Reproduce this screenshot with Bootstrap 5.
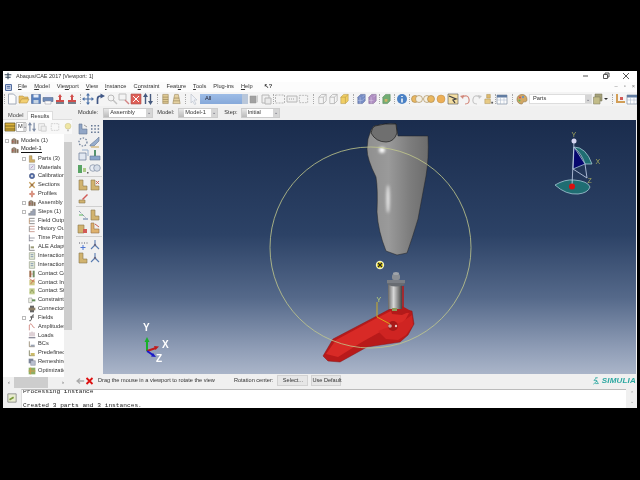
<!DOCTYPE html>
<html lang="en">
<head>
  <meta charset="UTF-8">
  <title>Abaqus/CAE 2017 [Viewport: 1]</title>
  <link href="https://cdn.jsdelivr.net/npm/bootstrap@5.3.2/dist/css/bootstrap.min.css" rel="stylesheet">
  <style>
    html, body { height: 100%; }
    body { background: #000; font-family: "Liberation Sans", Arial, sans-serif; font-size: 5.7px; line-height: 1; color: #333; overflow: hidden; }
    svg { display: block; }

    .cae-window { width: 634px; height: 337px; margin: 71px 0 0 3px; background: #f0f0f0; filter: blur(.4px); overflow: hidden; }
    .title-row { height: 11px; background: #fff; padding-left: 1px; font-size: 5.5px; }
    .title-row .win-btns { gap: 12px; padding-right: 7px; margin-left: auto; }
    .menu-row { height: 11px; background: #fcfcfc; padding-left: 2px; gap: 7px; }
    .menu-row u { text-underline-offset: 1px; }
    .menu-logo { margin-right: -1px; }
    .mdi-btns { margin-left: auto; gap: 6px; padding-right: 2px; color: #777; }
    .tool-row { height: 14px; background: #f4f4f4; }
    .tool-row .slot svg, .toolbox .slot svg { opacity: .78; }
    .slot { width: 12px; height: 12px; flex: none; }
    .slot-tight { width: 11px; }
    .slot-tree { width: 10px; height: 10px; opacity: .55; }
    .slot-gap { margin-left: 3px; }
    .vsep { flex: none; display: flex; justify-content: center; }
    .vsep::after { content: ""; width: 1px; height: 10px; border-left: 1px dotted #aaa; }
    .all-combo { width: 48px; height: 10px; background: linear-gradient(#9dbce6, #86a9da); padding-left: 5px; display: flex; align-items: center; flex: none; color: #223; }
    .all-combo span { margin-left: auto; width: 6px; height: 100%; background: #b9c7da; }
    .parts-combo { width: 63px; height: 10px; margin-left: 1px; background: #fff; border: 1px solid #ddd; padding-left: 3px; display: flex; align-items: center; flex: none; }
    .drop { margin-left: auto; width: 6px; height: 100%; background: #d6d6d6; color: #556; font-size: 5px; display: flex; align-items: center; justify-content: center; }
    .caret-tiny { width: 0; height: 0; border-left: 2px solid transparent; border-right: 2px solid transparent; border-top: 2px solid #333; flex: none; margin-right: 3px; }

    .left-col { width: 69px; flex: none; }
    .tab-row { height: 14px; padding: 5px 0 0 2px; border-bottom: 1px solid #ddd; }
    .tab-row .nav-link { padding: 0 3px; height: 9px; line-height: 9px; font-size: 5.7px; color: #444; border-radius: 0; margin: 0; border: 0; }
    .tab-row .nav-link.active { background: #fff; border: 1px solid #ddd; border-bottom: 0; line-height: 8px; color: #333; }
    .tree-tools { height: 14px; background: #f8f8f8; padding-left: 1px; }
    .tree-combo { width: 10px; height: 10px; border: 1px solid #bbb; background: #fff; display: flex; align-items: center; margin-right: 1px; flex: none; padding-left: 1px; }
    .tree-combo .drop { width: 4px; }
    .tree-wrap { height: 254px; background: #fff; position: relative; }
    .tree-list { width: 61px; height: 243px; overflow: hidden; padding-top: 2.5px; }
    .tree-row { height: 8.85px; display: flex; align-items: center; white-space: nowrap; position: relative; }
    .tree-row svg { width: 8px; height: 8px; flex: none; margin-right: 2px; opacity: .85; }
    .tree-box { width: 4px; height: 4px; border: 1px solid #bbb; flex: none; margin-right: 2px; }
    .lvl0 { padding-left: 2px; }
    .lvl1 { padding-left: 8px; }
    .lvl2 { padding-left: 25px; }
    .lvl2b { padding-left: 19px; }
    .model-name { border-bottom: 1px solid #111; color: #222; padding-bottom: .5px; }
    .v-bar { width: 8px; height: 243px; background: #f0f0f0; flex: none; }
    .v-thumb { height: 188px; margin-top: 8px; background: #cdcdcd; }
    .h-bar { height: 11px; background: #f0f0f0; padding: 0 8px 0 5px; color: #555; }
    .h-thumb { width: 34px; height: 11px; background: #cdcdcd; margin: 0 auto 0 4px; }

    .ctx-row { height: 14px; background: #f0f0f0; padding-left: 6px; }
    .ctx-combo { height: 10px; background: #fff; border: 1px solid #ccc; display: flex; align-items: center; flex: none; }
    .ctx-combo i { width: 5px; height: 100%; background: linear-gradient(#e8e8e8, #bbb); margin-right: 1px; flex: none; }
    .w-mod { width: 50px; margin: 0 4px 0 5px; }
    .w-model { width: 40px; margin: 0 6px 0 4px; }
    .w-step { width: 39px; margin-left: 3px; }
    .toolbox { width: 31px; flex: none; background: #f0f0f0; padding: 3px 0 0 5px; }
    .tb-grid { display: grid; grid-template-columns: 12px 12px; row-gap: 1px; }
    .tb-line { width: 26px; height: 1px; background: #cfcfcf; margin: 2px 0 2px -1px; }
    .viewport { width: 533px; height: 254px; flex: none; }

    .prompt-row { height: 14px; background: #f0f0f0; padding-left: 3px; font-size: 5.6px; }
    .prompt-row .btn { font-size: 5.6px; line-height: 1; height: 11px; padding: 0; border-radius: 0; background: #e6e6e6; border: 1px solid #d2d2d2; color: #333; white-space: nowrap; }
    .rot-label { margin-left: 19px; }
    .btn-select { width: 31px; margin-left: 4px; }
    .btn-default { width: 30px; margin-left: 3px; }
    .simulia { margin-left: auto; color: #2aa7a0; font-weight: bold; font-style: italic; font-size: 8px; letter-spacing: .2px; gap: 2px; white-space: nowrap; overflow: hidden; width: 44px; flex: none; }
    .msg-row { height: 19px; margin-top: 1px; background: #f0f0f0; }
    .msg-icon { width: 18px; flex: none; display: flex; align-items: center; justify-content: center; }
    .msg-box { flex: 1; background: #fff; border-top: 1px solid #bbb; border-left: 1px solid #ddd; font-family: "Liberation Mono", "Courier New", monospace; font-size: 6.2px; overflow: hidden; color: #222; position: relative; }
    .msg-box p { margin: 0; height: 9px; line-height: 9px; padding-left: 1px; white-space: pre; }
    .msg-first { margin-top: -3px !important; }
    .msg-last { margin-top: 5px !important; }
    .msg-bar { width: 11px; flex: none; background: #f0f0f0; color: #999; font-size: 5px; text-align: center; line-height: 8px; }
  </style>
</head>
<body>
  <div class="cae-window d-flex flex-column">
    <!-- Title bar -->
    <div class="title-row d-flex align-items-center">
      <svg class="me-1" width="8" height="8" viewBox="0 0 12 12"><path d="M6 1v10M1 4h10M2 8h8" stroke="#345" stroke-width="1.6"/></svg>
      <span>Abaqus/CAE 2017 [Viewport: 1]</span>
      <div class="win-btns d-flex align-items-center">
        <svg width="8" height="8" viewBox="0 0 8 8"><path d="M1 4h5" stroke="#555"/></svg>
        <svg width="8" height="8" viewBox="0 0 8 8"><path d="M1.5 2.5h4v4h-4zM3 2.5V1h4v4H5.500" fill="none" stroke="#555"/></svg>
        <svg width="8" height="8" viewBox="0 0 8 8"><path d="M1 1l6 6M7 1L1 7" stroke="#555"/></svg>
      </div>
    </div>

    <!-- Menu bar -->
    <div class="menu-row d-flex align-items-center">
      <svg class="menu-logo" width="7" height="7" viewBox="0 0 12 12"><path d="M1 1h10v10H1z" fill="#dfe6f2" stroke="#2b4c8c" stroke-width="1.500"/><path d="M3 4h6M3 7h6" stroke="#2b4c8c" stroke-width="1.500"/></svg>
      <span><u>F</u>ile</span>
      <span><u>M</u>odel</span>
      <span>Vie<u>w</u>port</span>
      <span><u>V</u>iew</span>
      <span><u>I</u>nstance</span>
      <span>C<u>o</u>nstraint</span>
      <span>Feat<u>u</u>re</span>
      <span><u>T</u>ools</span>
      <span>Plug-ins</span>
      <span><u>H</u>elp</span>
      <span class="ms-1 fw-bold">↖?</span>
      <div class="mdi-btns d-flex"><span>–</span><span>▫</span><span>×</span></div>
    </div>

    <!-- Main toolbar, filled in by the script below -->
    <div id="mainTools" class="tool-row d-flex align-items-center"></div>

    <div class="d-flex flex-grow-1">
      <!-- Model tree -->
      <div class="left-col d-flex flex-column">
        <div class="tab-row">
          <ul class="nav">
            <li class="nav-item"><a class="nav-link" href="#">Model</a></li>
            <li class="nav-item"><a class="nav-link active" href="#">Results</a></li>
          </ul>
        </div>
        <div id="treeTools" class="tree-tools d-flex align-items-center"></div>
        <div class="tree-wrap">
          <div class="d-flex">
            <div id="tree" class="tree-list"></div>
            <div class="v-bar"><div class="v-thumb"></div></div>
          </div>
          <div class="h-bar d-flex align-items-center"><span>‹</span><div class="h-thumb"></div><span>›</span></div>
        </div>
      </div>

      <div class="d-flex flex-column">
        <!-- Module / Model / Step -->
        <div class="ctx-row d-flex align-items-center">
          <span>Module:</span>
          <div class="ctx-combo w-mod"><i></i>Assembly<div class="drop">⌄</div></div>
          <span>Model:</span>
          <div class="ctx-combo w-model"><i></i>Model-1<div class="drop">⌄</div></div>
          <span>Step:</span>
          <div class="ctx-combo w-step"><i></i>Initial<div class="drop">⌄</div></div>
        </div>

        <div class="d-flex">
          <div id="toolbox" class="toolbox"></div>

          <!-- Viewport, coordinates are the screenshot's own -->
          <svg class="viewport" viewBox="103 121 533 254">
            <defs>
              <linearGradient id="bg" x1="0" y1="0" x2="0" y2="1">
                <stop offset="0" stop-color="#1a2c4d"/>
                <stop offset=".45" stop-color="#2c4266"/>
                <stop offset=".7" stop-color="#55698a"/>
                <stop offset=".9" stop-color="#8f9db6"/>
                <stop offset="1" stop-color="#aab5c9"/>
              </linearGradient>
              <linearGradient id="socket" x1="0" y1="0" x2="1" y2="0">
                <stop offset="0" stop-color="#8f8f8f"/>
                <stop offset=".35" stop-color="#9a9a9a"/>
                <stop offset=".7" stop-color="#7d7d7d"/>
                <stop offset="1" stop-color="#6c6c6c"/>
              </linearGradient>
              <linearGradient id="pin" x1="0" y1="0" x2="1" y2="0">
                <stop offset="0" stop-color="#666"/>
                <stop offset=".4" stop-color="#d8d8d8"/>
                <stop offset=".65" stop-color="#999"/>
                <stop offset="1" stop-color="#444"/>
              </linearGradient>
              <filter id="soft" x="-200%" y="-200%" width="500%" height="500%"><feGaussianBlur stdDeviation="1.600"/></filter>
            </defs>
            <rect x="103" y="121" width="533" height="254" fill="url(#bg)"/>

            <!-- Socket -->
            <path d="M371 131L374 127Q385 124 396 125L398 137L428 137Q429 160 426 177L418 220Q412 240 407 254L397 256L386 252Q378 232 377 213Q378 190 376 178Q367 160 367 150L368 140Z" fill="url(#socket)" stroke="#222" stroke-width=".5"/>
            <path d="M371 134Q372 128 375 127Q385 124 396 125L397 134Q394 143 386 143Q376 143 371 134Z" fill="#6f6f6f" stroke="#1c1c1c" stroke-width=".7"/>
            <ellipse cx="382" cy="151" rx="3" ry="3" fill="#fff" filter="url(#soft)"/>
            <ellipse cx="388" cy="200" rx="1.500" ry="14" fill="#f2f2f2" filter="url(#soft)"/>

            <!-- Foot -->
            <path d="M323 357L333 340L375 318L390 310L412 312L414 325L408 336L400 343L367 348L340 363L328 362Z" fill="#b81a1a" stroke="#8b1414" stroke-width=".5"/>
            <path d="M326 355L336 341L375 320L391 312L409 314L402 327L380 333L362 343L338 358Z" fill="#d82a26"/>
            <path d="M378 332L402 323L412 316L413 326L406 336L398 341L386 340Z" fill="#cf2422"/>
            <path d="M390 309L402 307L411 312L402 316L392 315Z" fill="#b31a1a"/>
            <circle cx="393" cy="327" r="5" fill="#a81818"/>
            <circle cx="390" cy="327" r="1.800" fill="#c9a4a0"/>
            <circle cx="396" cy="327" r="1.200" fill="#e8c4c0"/>
            <path d="M403 287V310" stroke="#b51c1c" stroke-width="1.600"/>

            <!-- Pin adapter -->
            <rect x="388" y="286" width="14" height="24" fill="url(#pin)"/>
            <ellipse cx="396" cy="284" rx="9" ry="3.500" fill="#686c72"/>
            <path d="M387 281h18v3h-18z" fill="#7a7e85"/>
            <rect x="392" y="275" width="8" height="6" rx="2" fill="#8b8f95"/>
            <ellipse cx="396" cy="274.500" rx="3" ry="1.500" fill="#a0a4aa"/>
            <rect x="392" y="309" width="5" height="3" fill="#8e9a5a"/>

            <!-- Rotation circle and centre -->
            <circle cx="370.500" cy="248.500" r="100.500" fill="none" stroke="#c3c98c" stroke-width=".8"/>
            <circle cx="380" cy="266" r="4.200" fill="#f3f3c8"/>
            <circle cx="380" cy="266" r="3" fill="#e2d21c"/>
            <path d="M378 264l4 4M382 264l-4 4" stroke="#222" stroke-width="1.200"/>

            <!-- Local csys on foot -->
            <path d="M377 303V318L390 325" fill="none" stroke="#d9b21a" stroke-width=".9"/>
            <text x="376.500" y="303" font-size="7" fill="#bcd27a" font-family="Liberation Sans">Y</text>

            <!-- Triad bottom left -->
            <path d="M147 352V342" stroke="#18b02a" stroke-width="2"/>
            <path d="M147 338l-2.500 5h5z" fill="#18b02a"/>
            <path d="M147 352L156 349" stroke="#c01c1c" stroke-width="2"/>
            <path d="M159 347.500l-5-.5 1.500 4z" fill="#c01c1c"/>
            <path d="M147 352L153 356" stroke="#1a1ac8" stroke-width="2"/>
            <path d="M156 358l-5-.5 2-3.500z" fill="#1a1ac8"/>
            <g fill="#fff" font-weight="bold" font-size="10" font-family="Liberation Sans">
              <text x="143" y="332">Y</text>
              <text x="162" y="349">X</text>
              <text x="156" y="363">Z</text>
            </g>

            <!-- Rotation triad top right -->
            <path d="M555 186Q565 180 574 181Q588 182 590 188Q588 194 578 195Q566 196 555 186Z" fill="#1f6d72" stroke="#b9d6e4" stroke-width=".7"/>
            <path d="M574 148Q586 148 592 165L585 165Q582 155 574 148Z" fill="#1f6d72" stroke="#b9d6e4" stroke-width=".7"/>
            <path d="M574 148L585 165L573 170Z" fill="#07076e" stroke="#b9d6e4" stroke-width=".7"/>
            <path d="M573 170L587 179L585 165M574 142L572 187" fill="none" stroke="#c8d4ee" stroke-width=".8"/>
            <circle cx="574" cy="142" r="2.500" fill="#d6d6f2"/>
            <circle cx="572" cy="187.500" r="3" fill="#d81010"/>
            <g fill="#a5a95e" font-size="7" font-family="Liberation Sans">
              <text x="571.500" y="137.500">Y</text>
              <text x="595.500" y="165">X</text>
              <text x="587.500" y="183.500">Z</text>
            </g>
          </svg>
        </div>

        <!-- Prompt area -->
        <div class="prompt-row d-flex align-items-center">
          <svg width="10" height="10" viewBox="0 0 12 12"><path d="M11 6H3M6 3L2.500 6 6 9" fill="none" stroke="#aaa" stroke-width="1.600"/></svg>
          <svg class="prompt-x" width="9" height="10" viewBox="0 0 12 12"><path d="M2 2l8 8M10 2l-8 8" stroke="#d11" stroke-width="2.400"/></svg>
          <span class="ms-1">Drag the mouse in a viewport to rotate the view</span>
          <span class="rot-label">Rotation center:</span>
          <button class="btn btn-select" type="button">Select...</button>
          <button class="btn btn-default" type="button">Use Default</button>
          <div class="simulia d-flex align-items-center">
            <svg width="10" height="10" viewBox="0 0 12 12"><path d="M7 1L3 5l5 1-6 5M6 4l4 6H5M9 1H5" fill="none" stroke="#2aa7a0" stroke-width="1.200"/></svg>
            <span>SIMULIA</span>
          </div>
        </div>
      </div>
    </div>

    <!-- Message area -->
    <div class="msg-row d-flex">
      <div class="msg-icon">
        <svg width="10" height="10" viewBox="0 0 12 12"><path d="M1 1h10v10H1z" fill="#e8eccf" stroke="#888"/><path d="M3 8l5-3" stroke="#7a9a3a" stroke-width="2"/></svg>
      </div>
      <div class="msg-box">
        <p class="msg-first">Processing instance</p>
        <p class="msg-last">Created 3 parts and 3 instances.</p>
      </div>
      <div class="msg-bar">⌃<br>⌄</div>
    </div>
  </div>

  <script src="https://cdn.jsdelivr.net/npm/bootstrap@5.3.2/dist/js/bootstrap.bundle.min.js"></script>
  <script>
    // Small icon set, all on a 12x12 box
    const tan = 'fill="#c9a24c" stroke="#6d5520" stroke-width=".6"';
    const icons = {
      doc: '<path d="M2.500 1h5L10 3.500V11H2.500z" fill="#fff" stroke="#8a94a6"/>',
      open: '<path d="M1 3h4l1 1h4v2H4L2 10H1z" fill="#e6b23a" stroke="#a87a14" stroke-width=".6"/><path d="M3.500 6H11l-2 4H1.500z" fill="#f3c64f" stroke="#a87a14" stroke-width=".6"/>',
      save: '<path d="M1.500 1.500h9v9h-9z" fill="#2f62b0" stroke="#1c3c78" stroke-width=".6"/><path d="M3.500 1.500h5v3h-5z" fill="#e4ecf8"/><path d="M3.500 7h5v3.500h-5z" fill="#bcd"/>',
      print: '<path d="M3 1.500h6v3H3z" fill="#eef"/><path d="M1 4.500h10v4H1z" fill="#4a6ea8" stroke="#2c4470" stroke-width=".6"/><path d="M3 8h6v3H3z" fill="#fff" stroke="#778" stroke-width=".5"/>',
      cae: '<path d="M6 1l2 3H7v3H5V4H4z" fill="#c8201c"/><path d="M2 7h8v2H2z" fill="#c8201c"/><path d="M2 9h8v2H2z" fill="#55606e"/>',
      move: '<path d="M6 1v10M1 6h10" stroke="#1d4d92" stroke-width="1.200"/><path d="M6 0l2 2.500H4zM6 12l2-2.500H4zM0 6l2.500-2v4zM12 6L9.500 4v4z" fill="#1d4d92"/>',
      rot: '<path d="M3.500 11V6Q3.500 3 7 3" fill="none" stroke="#0f2c66" stroke-width="1.700"/><path d="M6.500 .5L11 3 6.500 5.500z" fill="#0f2c66"/>',
      zoom: '<circle cx="5" cy="5" r="3" fill="#f4f4f4" stroke="#a8a8a8"/><path d="M7 7l4 4" stroke="#b4b4b4" stroke-width="1.400"/>',
      zoombox: '<path d="M1 1h7v6H1z" fill="#f4f4f4" stroke="#b0b0b0"/><path d="M7 7l4 4" stroke="#c66" stroke-width="1.400"/>',
      fit: '<path d="M1 1h10v10H1z" fill="#d8362c" stroke="#952018" stroke-width=".6"/><path d="M3 3l6 6M9 3l-6 6" stroke="#fff" stroke-width="1"/>',
      updown: '<path d="M3.500 11V3M8.500 1v8" stroke="#16305e" stroke-width="1.400"/><path d="M3.500 0L6 4H1zM8.500 12L11 8H6z" fill="#16305e"/>',
      bars: '<path d="M3 1h6v10H3z" fill="#dcc07a" stroke="#7a6228" stroke-width=".6"/><path d="M3 4h6M3 6.500h6M3 9h6" stroke="#7a6228" stroke-width=".7"/>',
      trap: '<path d="M4 1h4l2 10H2z" fill="#e3c98a" stroke="#7a6228" stroke-width=".6"/><path d="M3 5h6M2.500 8h7" stroke="#7a6228" stroke-width=".7"/>',
      arrow: '<path d="M3 1l6 6H6l2 4-1.500.5L4.500 8 3 10z" fill="#eef2f8" stroke="#a8b0be" stroke-width=".6"/>',
      gfade: '<path d="M2 3h6v7H2z" fill="#8a8a8a" stroke="#777" stroke-width=".5"/><path d="M8 3l2-1v7l-2 1z" fill="#c4c4c4"/>',
      gbox: '<path d="M2 2h7v8H2z" fill="#f0f0f0" stroke="#a6a6a6"/><path d="M5 5h6v6H5z" fill="#e8e8e8" stroke="#a6a6a6"/>',
      gdash: '<path d="M1.500 2h9v8h-9z" fill="none" stroke="#a6a6a6" stroke-dasharray="2 1"/>',
      gxyz: '<path d="M1 3h10v6H1z" fill="#efefef" stroke="#a6a6a6"/><path d="M3 6h6" stroke="#888" stroke-dasharray="1 1"/>',
      wire: '<path d="M2 4l3-3h5v7l-3 3H2zM2 4h5v7M7 4l3-3" fill="none" stroke="#9a9a9a" stroke-width=".8"/>',
      cube: '<path d="M2 4l3-3h5v7l-3 3H2z" fill="#f0c43c" stroke="#a47c14" stroke-width=".6"/><path d="M2 4h5v7M7 4l3-3" fill="none" stroke="#a47c14" stroke-width=".6"/>',
      mesh: '<path d="M2 4l3-3h5v7l-3 3H2z" fill="#5470b8" stroke="#2c4280" stroke-width=".6"/><path d="M2 7.500h5M4.500 4v7M7 4l3-3M7 7.500l3-3" stroke="#c0cdec" stroke-width=".5"/>',
      meshp: '<path d="M2 4l3-3h5v7l-3 3H2z" fill="#9c72b4" stroke="#5c3c78" stroke-width=".6"/><path d="M2 7.500h5M4.500 4v7M7 4l3-3" stroke="#e0d0ec" stroke-width=".5"/>',
      meshg: '<path d="M2 4l3-3h5v7l-3 3H2z" fill="#4e9a50" stroke="#2a6430" stroke-width=".6"/><path d="M4 6h3v3H4z" fill="#c4a040"/>',
      info: '<circle cx="6" cy="6" r="5" fill="#1c62b8"/><path d="M6 3v1M6 5.500V9.500" stroke="#fff" stroke-width="1.500"/>',
      rings: '<circle cx="4" cy="6" r="3.500" fill="#e8a838" stroke="#8a6018" stroke-width=".6"/><circle cx="8" cy="6" r="3.500" fill="#f4f0e0" stroke="#8a6018" stroke-width=".6"/>',
      rings2: '<circle cx="4" cy="6" r="3.500" fill="#f4f0e0" stroke="#8a6018" stroke-width=".6"/><circle cx="8" cy="6" r="3.500" fill="#e8a838" stroke="#8a6018" stroke-width=".6"/>',
      ball: '<circle cx="6" cy="6" r="4" fill="#ec9c2c" stroke="#a87018" stroke-width=".5"/>',
      pick: '<path d="M1 1h10v10H1z" fill="#f4d88c" stroke="#222" stroke-width=".6"/><path d="M2 3l7 3-3 1 2 3" fill="none" stroke="#111" stroke-width="1.300"/>',
      undo: '<path d="M3 4q6-3 7 2t-4 5" fill="none" stroke="#c96a5a" stroke-width="1.200"/><path d="M1 3l4-1-1 4z" fill="#c96a5a"/>',
      redo: '<path d="M9 4Q3 1 2 6t4 5" fill="none" stroke="#b8b8b8" stroke-width="1.200"/><path d="M11 3L7 2l1 4z" fill="#b8b8b8"/>',
      stack: '<path d="M4 1h4v4H4z" fill="#d9aa48" stroke="#8a6a20" stroke-width=".5"/><path d="M2 6h6v5H2z" fill="#e4bf66" stroke="#8a6a20" stroke-width=".5"/><path d="M9 9h2v2H9z" fill="#333"/>',
      table: '<path d="M1 2h10v9H1z" fill="#fff" stroke="#445a78" stroke-width=".6"/><path d="M1 2h10v2.500H1z" fill="#3a5c8c"/><path d="M1 7h10M4.500 4.500V11M8 4.500V11" stroke="#8fa2bc" stroke-width=".5"/>',
      palette: '<path d="M6 1.500C2.500 1.500 1 4 1 6.500S3 11 5.500 11c1.500 0 1-1.500 2-2s3.500.500 3.500-2.500S9 1.500 6 1.500z" fill="#c8923c" stroke="#6d4c18" stroke-width=".6"/><circle cx="4" cy="4.500" r="1" fill="#c22"/><circle cx="7" cy="4" r="1" fill="#2a6fc2"/><circle cx="3.500" cy="7.500" r="1" fill="#3a3"/>',
      cubes: '<path d="M3 1h7v7H3z" fill="#8f8a58" stroke="#55522c" stroke-width=".5"/><path d="M1.500 4h6.500v7H1.500z" fill="#b4ad6c" stroke="#55522c" stroke-width=".5"/>',
      axes: '<path d="M3 1v8h8" fill="none" stroke="#c9862c" stroke-width="2"/><path d="M6 4h3v3H6z" fill="#c9302c"/>',
      partb: '<path d="M2 1h3v5h5v5H2z" fill="#7792bb" stroke="#3d5478" stroke-width=".6"/><path d="M7 2l3 2" stroke="#555" stroke-width=".7"/>',
      dots: '<path d="M2 2h1.500v1.500H2zM5.300 2h1.500v1.500H5.300zM8.600 2h1.500v1.500H8.600zM2 5.300h1.500v1.500H2zM5.300 5.300h1.500v1.500H5.300zM8.600 5.300h1.500v1.500H8.600zM2 8.600h1.500v1.500H2zM5.300 8.600h1.500v1.500H5.300zM8.600 8.600h1.500v1.500H8.600z" fill="#3d5478"/>',
      ring: '<circle cx="6" cy="6" r="4" fill="none" stroke="#3d5478" stroke-width="1.200" stroke-dasharray="1.500 1.500"/>',
      ramp: '<path d="M1 9l6-5 3-3v4L5 10H1z" fill="#7f9cc4" stroke="#3d5478" stroke-width=".6"/><path d="M2 11h8" stroke="#c9a24c" stroke-width="1.200"/>',
      frame: '<path d="M2 4h7v7H2z" fill="#dfe6f2" stroke="#3d5478" stroke-width=".7"/><path d="M5 1h6v6" fill="none" stroke="#7f9cc4"/>',
      post: '<path d="M5 1h2v6H5z" fill="#2a7a4a"/><path d="M1 7h10v4H1z" fill="#6d90c0" stroke="#3d5478" stroke-width=".6"/>',
      greenp: '<path d="M1 3h4v8H1z" fill="#2f8f3f"/><path d="M6 6h3v4H6z" fill="#9bc06c"/><path d="M10 10h1.500v1.500H10z" fill="#333"/>',
      hole: '<circle cx="4" cy="6" r="3.300" fill="#e8edf4" stroke="#5a6c88" stroke-width=".7"/><circle cx="8" cy="6" r="3.300" fill="#cfd8e6" stroke="#5a6c88" stroke-width=".7"/>',
      bracket: '<path d="M2 1h4v6h4v4H2z" ' + tan + '/>',
      bracketx: '<path d="M2 1h4v6h4v4H2z" ' + tan + '/><path d="M7 2l3 3M10 2L7 5" stroke="#b32" stroke-width=".9"/>',
      pencil: '<path d="M2 8h6v3H2z" ' + tan + '/><path d="M5 7l5-5 1 1-5 5z" fill="#c9302c"/>',
      csysg: '<path d="M2 2l7 7" stroke="#3d5478" stroke-dasharray="1 1"/><path d="M6 9h5v2H6z" fill="#8fa2bc"/><path d="M2 6h4" stroke="#3a3"/>',
      bracketr: '<path d="M1 3h6v8H1z" ' + tan + '/><path d="M6 7h4v4H6z" fill="#c9302c"/>',
      lrs: '<path d="M2 1h3v6h5v4H2z" fill="#d9a04a" stroke="#7a4a18" stroke-width=".6"/><path d="M6 2l4 3" stroke="#b32"/>',
      triads: '<path d="M2 4h1M4.500 4h1M7 4h1M9.500 4h1" stroke="#334" stroke-width="1.200"/><path d="M6 6v5M3.500 8.500h5" stroke="#25c" stroke-width="1"/>',
      tripod: '<path d="M6 1v5L2 10M6 6l4 4" fill="none" stroke="#2f5ca0" stroke-width="1.100"/><circle cx="6" cy="6" r="1.200" fill="#446"/>',
      model: '<path d="M1 10V4l3-2v8zM5 10V2l3 2v6zM9 10V5h2v5z" fill="#7a5c40" stroke="#3d2c1c" stroke-width=".4"/><path d="M2 7h2" stroke="#c22"/>',
      stackicon: '<path d="M1 2h10v8H1z" fill="#d9b13c" stroke="#5a4a18" stroke-width=".7"/><path d="M1 5h10M1 8h10" stroke="#5a4a18" stroke-width=".7"/>',
      bulb: '<circle cx="6" cy="5" r="3.500" fill="#e8d860" stroke="#a09030" stroke-width=".6"/><path d="M5 9h2v2H5z" fill="#888"/>',
      mat: '<path d="M2 2h8v8H2z" fill="#dfe2ee" stroke="#7d86a0" stroke-width=".7"/><path d="M4 8l4-4" stroke="#9a5aa0"/>',
      calib: '<circle cx="6" cy="6" r="4" fill="#3d5a9c" stroke="#1d2d5c" stroke-width=".7"/><circle cx="6" cy="6" r="1.500" fill="#f0f0f0"/>',
      sect: '<path d="M2 2l8 8M10 2l-8 8" stroke="#b88a3a" stroke-width="2"/><circle cx="6" cy="6" r="2" fill="#8a5a2a"/>',
      prof: '<path d="M6 1v10M2 6h8" stroke="#b85038" stroke-width="2"/><path d="M4 4h4v4H4z" fill="#d8806a"/>',
      steps: '<path d="M1 11V8h3V5h3V2h4v9z" fill="#8a94a6" stroke="#444" stroke-width=".5"/>',
      field: '<path d="M2 2h8M2 6h8M2 10h8" stroke="#4a4a4a" stroke-width="1.100"/><path d="M2 2v8" stroke="#a5642a"/>',
      hist: '<path d="M2 2h8M2 6h8M2 10h8" stroke="#b06a5a" stroke-width="1.100"/><path d="M2 2v8" stroke="#555"/>',
      time: '<path d="M2 1v10M2 6h8M2 10h6" stroke="#556" stroke-width="1"/>',
      ale: '<path d="M2 2v9h8" fill="none" stroke="#5a5a5a" stroke-width="1.200"/><path d="M4 5h5v3H4z" fill="#8a8a60"/>',
      inter: '<path d="M2 1h8v10H2z" fill="#dfe6d4" stroke="#5a6a48" stroke-width=".7"/><path d="M4 4h4M4 7h4" stroke="#3a5a8c"/>',
      conC: '<path d="M2 1h3v10H2z" fill="#8a5028"/><path d="M7 1h3v10H7z" fill="#5a7a4a"/><path d="M5 6h2" stroke="#c22"/>',
      conI: '<path d="M2 3h8v8H2z" fill="#c8c070"/><path d="M2 1l8 5M10 1L4 9" stroke="#c4442c" stroke-width="1"/>',
      conS: '<path d="M2 2h8v9H2z" fill="#b8c67a"/><path d="M3 9l3-5 3 5" fill="none" stroke="#6d7c3a" stroke-width="1"/>',
      constr: '<path d="M1 3h5v7H1z" fill="#edf2e4" stroke="#555" stroke-width=".6"/><path d="M6 5h5v3H6z" fill="#4a7a3a"/>',
      conn: '<path d="M3 1h6v10H3z" fill="#4a4a4a"/><path d="M1 4h10v4H1z" fill="#7a6a50"/>',
      fx: '<path d="M9 1.500C6 1 6 3 5.500 6S4 11 2 10M3 4.500h6" fill="none" stroke="#111" stroke-width="1.300"/>',
      ampl: '<path d="M2 11V3q3-4 4 0t4 4" fill="none" stroke="#b8483c" stroke-width="1"/>',
      loads: '<path d="M3 2v6M6 1v7M9 2v6" stroke="#8a5a6a" stroke-width="1"/><path d="M1 9h10v2H1z" fill="#7a7a8a"/>',
      bcs: '<path d="M2 2v8h8" fill="none" stroke="#7a6a4a" stroke-width="1.200"/><path d="M4 7h6v3H4z" fill="#8a94a6"/>',
      pre: '<path d="M2 2v8h8" fill="none" stroke="#5a5a30" stroke-width="1.200"/><path d="M4 6h6v4H4z" fill="#c4b050"/>',
      remesh: '<path d="M1 1h7v7H1z" fill="#667088"/><path d="M4 4h7v7H4z" fill="#aeb6c8" stroke="#445" stroke-width=".5"/>',
      optim: '<path d="M1 1h10v10H1z" fill="#7aa04a"/><path d="M4 1v10M1 6h10" stroke="#c98a2c" stroke-width="1.500"/>',
      sketch: '<path d="M2 11V2h4v4h4" fill="none" stroke="#555" stroke-width="1.100"/>'
    };
    const svgIcon = name => '<svg viewBox="0 0 12 12" width="100%" height="100%">' + icons[name] + '</svg>';
    const slot = (name, cls) => '<div class="slot ' + (cls || '') + '">' + svgIcon(name) + '</div>';
    const sep = w => '<div class="vsep" style="width:' + w + 'px"></div>';

    // Main toolbar
    let bar = sep(3);
    ['doc', 'open', 'save', 'print', 'cae', 'cae'].forEach(n => bar += slot(n));
    bar += sep(4);
    ['move', 'rot', 'zoom', 'zoombox', 'fit', 'updown'].forEach(n => bar += slot(n));
    bar += sep(6);
    ['bars', 'trap'].forEach(n => bar += slot(n, 'slot-tight'));
    bar += sep(6) + slot('arrow');
    bar += '<div class="all-combo">All<span></span></div>';
    bar += slot('gfade') + slot('gbox') + sep(2) + slot('gdash') + slot('gxyz') + slot('gdash', 'slot-tight');
    bar += sep(8);
    ['wire', 'wire', 'cube'].forEach(n => bar += slot(n, 'slot-tight'));
    bar += sep(6);
    bar += slot('mesh', 'slot-tight') + slot('meshp', 'slot-tight') + sep(3) + slot('meshg', 'slot-tight');
    bar += sep(4) + slot('info') + sep(3);
    ['rings', 'rings2', 'ball', 'pick', 'undo', 'redo'].forEach(n => bar += slot(n));
    bar += slot('stack', 'slot-tight') + sep(2) + slot('table');
    bar += sep(8) + slot('palette');
    bar += '<div class="parts-combo">Parts<div class="drop">⌄</div></div>';
    bar += slot('cubes') + '<div class="caret-tiny"></div>' + sep(3) + slot('axes') + slot('table');
    document.getElementById('mainTools').innerHTML = bar;

    // Tree toolbar
    document.getElementById('treeTools').innerHTML =
      slot('stackicon') +
      '<div class="tree-combo">M<div class="drop">⌄</div></div>' +
      slot('updown', 'slot-tree') + slot('gbox', 'slot-tree') + slot('gdash', 'slot-tree slot-gap') + slot('bulb', 'slot-tree slot-gap');

    // Model tree rows: [level, icon, label, has expander]
    const rows = [
      [0, 'model', 'Models (1)', 1],
      [1, 'model', 'Model-1', 0],
      [2, 'bracket', 'Parts (3)', 1],
      [3, 'mat', 'Materials'],
      [3, 'calib', 'Calibrations'],
      [3, 'sect', 'Sections'],
      [3, 'prof', 'Profiles'],
      [2, 'model', 'Assembly', 1],
      [2, 'steps', 'Steps (1)', 1],
      [3, 'field', 'Field Output Requests'],
      [3, 'hist', 'History Output Requests'],
      [3, 'time', 'Time Points'],
      [3, 'ale', 'ALE Adaptive Mesh Constraints'],
      [3, 'inter', 'Interactions'],
      [3, 'inter', 'Interaction Properties'],
      [3, 'conC', 'Contact Controls'],
      [3, 'conI', 'Contact Initializations'],
      [3, 'conS', 'Contact Stabilizations'],
      [3, 'constr', 'Constraints'],
      [3, 'conn', 'Connector Sections'],
      [2, 'fx', 'Fields', 1],
      [3, 'ampl', 'Amplitudes'],
      [3, 'loads', 'Loads'],
      [3, 'bcs', 'BCs'],
      [3, 'pre', 'Predefined Fields'],
      [3, 'remesh', 'Remeshing Rules'],
      [3, 'optim', 'Optimization Tasks'],
      [3, 'sketch', 'Sketches']
    ];
    const lvlClass = ['lvl0', 'lvl1', 'lvl2b', 'lvl2'];
    document.getElementById('tree').innerHTML = rows.map(r => {
      const box = r[3] ? '<span class="tree-box"></span>' : '';
      const ic = '<svg viewBox="0 0 12 12">' + icons[r[1]] + '</svg>';
      const label = r[2] === 'Model-1' ? '<span class="model-name">Model-1</span>' : '<span>' + r[2] + '</span>';
      return '<div class="tree-row ' + lvlClass[r[0]] + '">' + box + ic + label + '</div>';
    }).join('');

    // Module toolbox, groups split by a line
    const groups = [
      ['partb', 'dots', 'ring', 'ramp', 'frame', 'post', 'greenp', 'hole'],
      ['bracket', 'bracketx', 'pencil'],
      ['csysg', 'bracket', 'bracketr', 'lrs'],
      ['triads', 'tripod', 'bracket', 'tripod']
    ];
    document.getElementById('toolbox').innerHTML = groups.map(g =>
      '<div class="tb-grid">' + g.map(n => slot(n)).join('') + '</div>'
    ).join('<div class="tb-line"></div>');
  </script>
</body>
</html>
